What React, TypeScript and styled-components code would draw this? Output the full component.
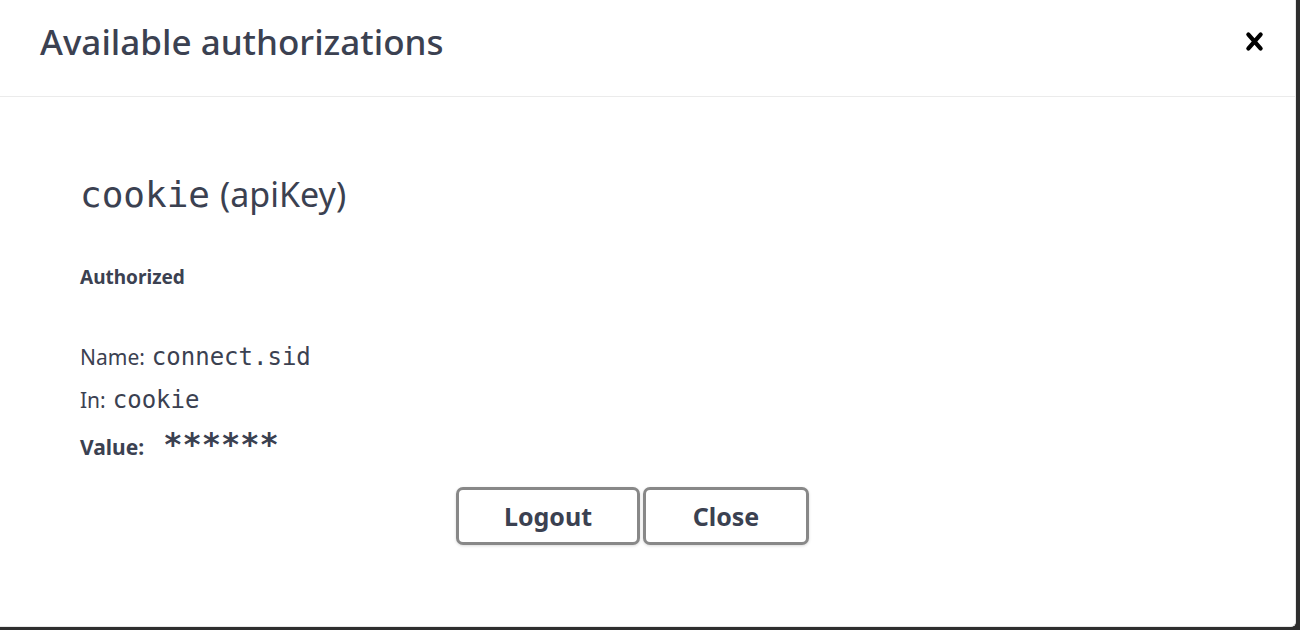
import React from "react";
import styled, { createGlobalStyle } from "styled-components";

const Global = createGlobalStyle`
  html, body { margin: 0; padding: 0; }
  body {
    width: 1300px;
    height: 630px;
    overflow: hidden;
    background: #2e2e2e;
    font-family: "Noto Sans", "Open Sans", sans-serif;
    color: #3b4151;
  }
`;

const Modal = styled.div`
  width: 1296px;
  height: 627px;
  background: #fff;
  border-right: 1px solid #e8e8e8;
  border-bottom: 1px solid #e8e8e8;
  border-bottom-right-radius: 5px;
  box-sizing: border-box;
  display: flex;
  flex-direction: column;
`;

const Header = styled.div`
  height: 97px;
  box-sizing: border-box;
  border-bottom: 1px solid #ebebeb;
  display: flex;
  align-items: center;
  justify-content: space-between;
  padding: 0 23px 13px 40px;
`;

const Title = styled.h3`
  margin: 0;
  font-size: 35px;
  font-weight: 500;
  color: #3b4151;
`;

const CloseBtn = styled.button`
  border: none;
  background: none;
  padding: 0;
  width: 35px;
  height: 35px;
  display: flex;
  cursor: pointer;
`;

const Content = styled.div`
  padding: 74px 40px 0 80px;
  display: flex;
  flex-direction: column;
`;

const SchemeTitle = styled.h4`
  margin: 0;
  height: 50px;
  display: flex;
  align-items: baseline;
  gap: 10px;
  font-size: 34px;
  font-weight: 400;
  color: #3b4151;
`;

const Mono = styled.code<{ $size: number }>`
  font-family: "DejaVu Sans Mono", "Liberation Mono", monospace;
  font-size: ${(p) => p.$size}px;
  color: #3b4151;
`;

const Status = styled.h6`
  margin: 42px 0 0;
  font-size: 19px;
  font-weight: 700;
  color: #3b4151;
  line-height: 28px;
`;

const Row = styled.div<{ $top: number }>`
  margin-top: ${(p) => p.$top}px;
  display: flex;
  align-items: baseline;
  gap: 7px;
  font-size: 21px;
  line-height: 30px;
`;

const Label = styled.label<{ $bold?: boolean }>`
  font-weight: ${(p) => (p.$bold ? 700 : 400)};
  font-size: 21px;
`;

const Stars = styled.code`
  font-family: "DejaVu Sans Mono", "Liberation Mono", monospace;
  font-size: 32px;
  font-weight: 700;
  margin-left: 12px;
  color: #3b4151;
`;

const BtnWrap = styled.div`
  display: flex;
  justify-content: center;
  gap: 3px;
  padding-right: 70px;
  margin-top: 25px;
`;

const Button = styled.button<{ $w: number }>`
  width: ${(p) => p.$w}px;
  height: 58px;
  box-sizing: border-box;
  border: 3px solid #888;
  border-radius: 7px;
  background: #fff;
  box-shadow: 0 1px 3px rgba(0, 0, 0, 0.15);
  font-family: "Noto Sans", "Open Sans", sans-serif;
  font-size: 25px;
  font-weight: 700;
  color: #3b4151;
  padding: 0;
  cursor: pointer;
`;

export default function App() {
  return (
    <>
      <Global />
      <Modal>
        <Header>
          <Title>Available authorizations</Title>
          <CloseBtn aria-label="Close">
            <svg width="35" height="35" viewBox="0 0 20 20">
              <path
                fill="#000"
                d="M14.348 14.849a1.2 1.2 0 0 1-1.697 0L10 11.819l-2.651 3.029a1.2 1.2 0 1 1-1.697-1.697l2.758-3.15-2.759-3.152a1.2 1.2 0 1 1 1.697-1.697L10 8.183l2.651-3.031a1.2 1.2 0 1 1 1.697 1.697l-2.758 3.152 2.758 3.15a1.2 1.2 0 0 1 0 1.698z"
              />
            </svg>
          </CloseBtn>
        </Header>
        <Content>
          <SchemeTitle>
            <Mono $size={36}>cookie</Mono>
            <span>(apiKey)</span>
          </SchemeTitle>
          <Status>Authorized</Status>
          <Row $top={51}>
            <Label>Name:</Label>
            <Mono $size={24}>connect.sid</Mono>
          </Row>
          <Row $top={13}>
            <Label>In:</Label>
            <Mono $size={24}>cookie</Mono>
          </Row>
          <Row $top={14}>
            <Label $bold>Value:</Label>
            <Stars>******</Stars>
          </Row>
          <BtnWrap>
            <Button $w={184}>Logout</Button>
            <Button $w={166}>Close</Button>
          </BtnWrap>
        </Content>
      </Modal>
    </>
  );
}
